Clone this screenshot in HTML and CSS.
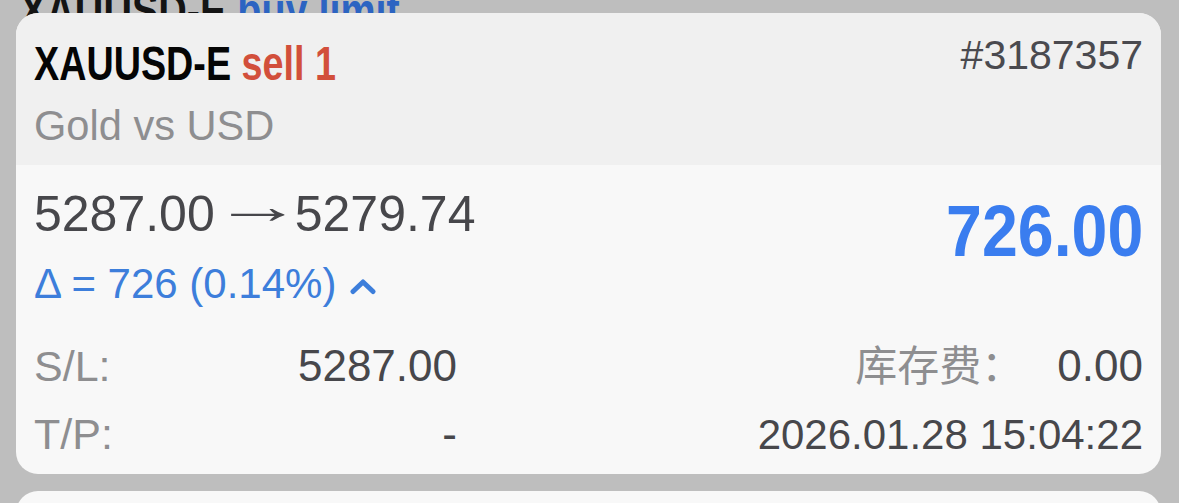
FILE: index.html
```html
<!DOCTYPE html>
<html lang="zh">
<head>
<meta charset="utf-8">
<title>Position</title>
<link rel="stylesheet" href="styles.css">
</head>
<body>
<div class="screen">
  <div class="ghost"><span class="ghost-sym">XAUUSD-E</span> <span class="ghost-type">buy limit</span></div>
  <div class="list">
    <article class="card">
      <header class="card-head">
        <div class="head-row">
          <h2 class="title"><span class="sym">XAUUSD-E</span> <span class="side">sell 1</span></h2>
          <span class="ticket">#3187357</span>
        </div>
        <div class="desc">Gold vs USD</div>
      </header>
      <div class="card-body">
        <div class="price-row">
          <div class="price-col">
            <div class="prices"><span>5287.00</span><span class="arrow">→</span><span>5279.74</span></div>
            <div class="delta">Δ = 726 (0.14%)<svg class="chev" width="28" height="18" viewBox="0 0 28 18"><path d="M4 14.5 L14 5 L24 14.5" fill="none" stroke="#3d7edb" stroke-width="5" stroke-linecap="round" stroke-linejoin="round"/></svg></div>
          </div>
          <div class="profit"><span class="profit-num">726.00</span></div>
        </div>
        <div class="info-row">
          <div class="pair"><span class="label">S/L:</span><span class="val">5287.00</span></div>
          <div class="right"><span class="label cjk">库存费：</span><span class="val fee">0.00</span></div>
        </div>
        <div class="info-row">
          <div class="pair"><span class="label">T/P:</span><span class="val">-</span></div>
          <div class="right"><span class="val date">2026.01.28 15:04:22</span></div>
        </div>
      </div>
    </article>
    <article class="card next"></article>
  </div>
</div>
</body>
</html>
```

FILE: styles.css
```css
* { box-sizing: border-box; }
html, body { margin: 0; padding: 0; }
body {
  background: #bebebe;
  font-family: "Liberation Sans", Arial, "Noto Sans CJK SC", sans-serif;
  width: 1179px;
  height: 503px;
  overflow: hidden;
}
.screen {
  position: relative;
  width: 1179px;
  height: 503px;
  overflow: hidden;
}
.ghost {
  position: absolute;
  left: 20px;
  top: -19px;
  font-size: 50px;
  line-height: 60px;
  font-weight: bold;
  white-space: nowrap;
  transform: scaleX(0.79);
  transform-origin: left top;
  color: #141414;
}
.ghost-type { color: #2c64c2; }
.list {
  position: relative;
  padding: 13px 18px 0 16px;
}
.card {
  background: #f8f8f8;
  border-radius: 22px;
  overflow: hidden;
}
.card-head {
  background: #f0f0f0;
  height: 152px;
  padding: 20px 18px 0 18px;
}
.head-row {
  display: flex;
  justify-content: space-between;
  align-items: flex-start;
}
.title {
  margin: 0;
  font-size: 49px;
  line-height: 60px;
  font-weight: bold;
  white-space: nowrap;
  transform: scaleX(0.77);
  transform-origin: left top;
  color: #050505;
}
.side { color: #d24f3b; }
.ticket {
  font-size: 41px;
  line-height: 44px;
  color: #4a4a4f;
}
.desc {
  margin-top: 8px;
  font-size: 41.6px;
  line-height: 50px;
  color: #8e8e90;
}
.card-body {
  padding: 19px 18px 0 18px;
  height: 309px;
}
.price-row {
  display: flex;
  justify-content: space-between;
  align-items: flex-start;
}
.prices {
  font-size: 50px;
  line-height: 60px;
  color: #47474b;
  white-space: nowrap;
}
.arrow {
  display: inline-block;
  margin: 0 12px 0 18px;
  vertical-align: 8px;
  line-height: 40px;
  transform: scaleX(1.8);
}
.delta {
  margin-top: 15px;
  font-size: 42px;
  line-height: 50px;
  color: #3d7edb;
  white-space: nowrap;
}
.chev {
  margin-left: 13px;
  vertical-align: 3px;
}
.profit {
  margin-top: 7px;
  font-size: 72px;
  line-height: 80px;
  font-weight: bold;
  color: #3a7def;
}
.profit-num {
  display: inline-block;
  transform: scaleX(0.895);
  transform-origin: right top;
}
.info-row {
  display: flex;
  align-items: baseline;
  line-height: 56px;
}
.price-row + .info-row { margin-top: 26px; }
.info-row + .info-row { margin-top: 12px; }
.pair {
  width: 423px;
  display: flex;
  justify-content: space-between;
  align-items: baseline;
}
.right {
  flex: 1;
  display: flex;
  justify-content: flex-end;
  align-items: baseline;
}
.label {
  font-size: 43px;
  color: #8e8e90;
}
.cjk {
  font-family: "Noto Sans CJK SC", sans-serif;
  font-size: 42px;
}
.val {
  font-size: 44px;
  color: #47474b;
}
.fee { margin-left: 34px; }
.date { font-size: 42px; }
.card.next {
  margin-top: 17px;
  height: 60px;
  border-radius: 22px 22px 0 0;
}
```
